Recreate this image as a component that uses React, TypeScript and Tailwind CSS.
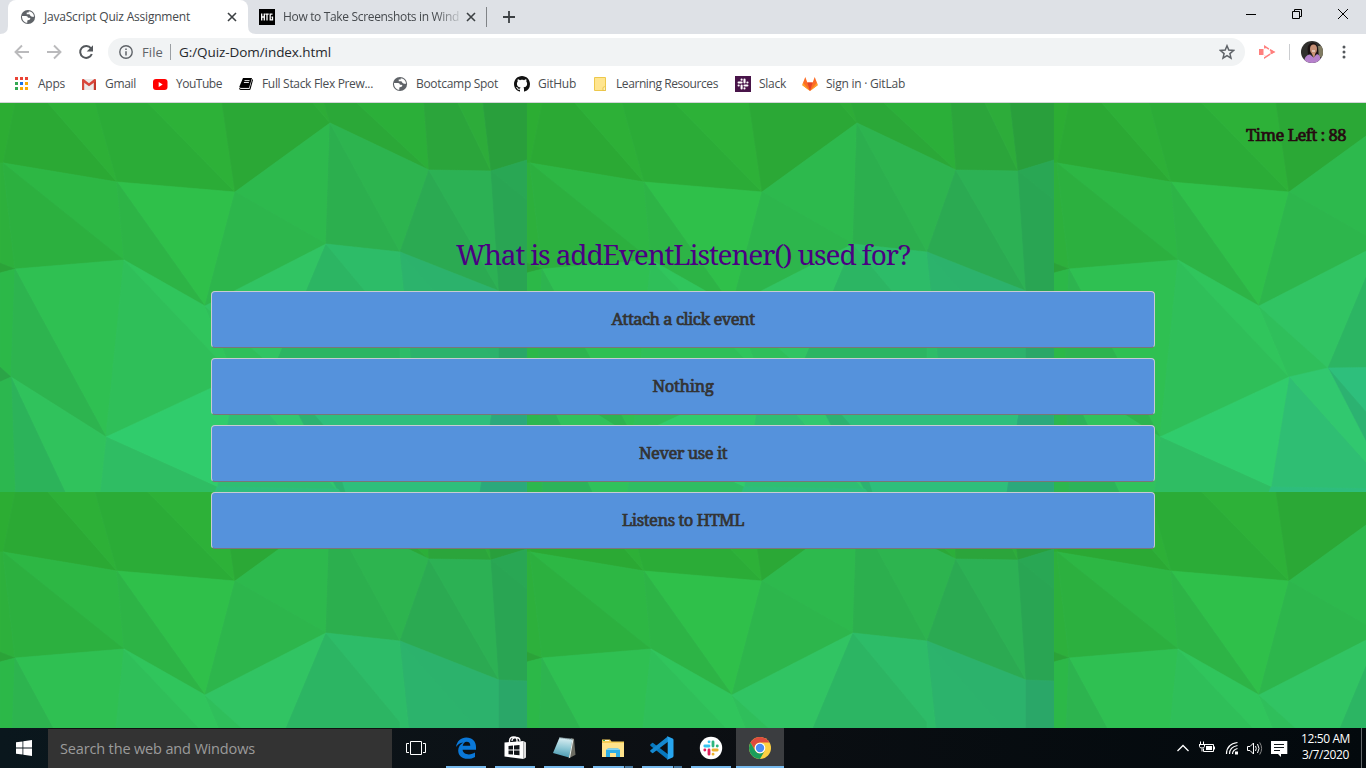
import { useLayoutEffect, useRef, useState } from "react";
import type { ReactNode } from "react";

/* Text set to an exact line width by spreading the difference over its letters. */
function Fit({ w, className = "", children }: { w: number; className?: string; children: string }) {
  const ref = useRef<HTMLSpanElement>(null);
  const [ls, setLs] = useState(0);
  useLayoutEffect(() => {
    if (ref.current) setLs((w - ref.current.getBoundingClientRect().width) / children.length);
  }, [w, children]);
  return (
    <span ref={ref} className={"inline-block whitespace-nowrap " + className} style={{ letterSpacing: ls + "px" }}>
      {children}
    </span>
  );
}

const FACETS: [string, string][] = [
  ["#2cad33", "0,0 15,0 3,60 0,60"],
  ["#2ba934", "15,0 48,0 117,79 3,60"],
  ["#2db037", "48,0 95,0 117,79"],
  ["#2bac37", "95,0 148,0 235,89 117,79"],
  ["#2db138", "148,0 222,0 235,89"],
  ["#2ba836", "222,0 313,0 330,20 235,89"],
  ["#2dac37", "313,0 324,0 330,20"],
  ["#2ba838", "324,0 357,0 429,67 330,20"],
  ["#2baf39", "357,0 424,0 429,67"],
  ["#2ba53b", "424,0 458,0 491,68 429,67"],
  ["#2dac3a", "458,0 483,0 491,68"],
  ["#299f3c", "483,0 527,0 527,57 491,68"],
  ["#2db03c", "0,60 3,60 15,166 0,160"],
  ["#2db744", "3,60 117,79 124,157"],
  ["#2cb03f", "3,60 124,157 15,166"],
  ["#2fc04a", "117,79 235,89 205,203"],
  ["#2db446", "117,79 124,157 205,203"],
  ["#2db94d", "235,89 330,20 326,141"],
  ["#2db64c", "235,89 326,141 205,203"],
  ["#2caf4e", "330,20 326,141 400,149"],
  ["#2db44f", "330,20 429,67 400,149"],
  ["#2baa52", "429,67 400,149 499,188"],
  ["#2cb154", "429,67 491,68 499,188"],
  ["#29a754", "491,68 527,57 527,97"],
  ["#29a553", "491,68 527,97 527,189 499,188"],
  ["#2ba338", "0,160 15,166 0,170"],
  ["#2cb848", "0,170 15,166 11,274 0,264"],
  ["#2fc052", "15,166 124,157 106,334"],
  ["#2db44f", "15,166 106,334 11,274"],
  ["#2fbf59", "124,157 235,274 106,334"],
  ["#30c55c", "124,157 205,203 235,274"],
  ["#2fbf5b", "205,203 274,265 235,274"],
  ["#31c463", "205,203 326,141 274,265"],
  ["#2cb563", "326,141 274,265 400,262 400,230"],
  ["#2dbc68", "326,141 400,149 412,262 400,262 400,230"],
  ["#2cb36c", "400,149 412,262 499,262 499,230"],
  ["#2cb26c", "400,149 499,188 499,262"],
  ["#2aa768", "499,188 527,189 527,270 499,262"],
  ["#2ebf7c", "274,265 499,262 480,389 345,389"],
  ["#2ba97c", "499,262 527,262 527,389 480,389"],
  ["#2cb271", "274,265 325,324 345,389 338,389"],
  ["#31c86f", "235,274 274,265 338,389"],
  ["#2fbe73", "235,274 338,389 217,384"],
  ["#30cc6c", "106,334 235,274 217,384"],
  ["#2fbd63", "106,334 217,384 215,389 100,389"],
  ["#2ebd7c", "217,384 338,386 340,389 215,389"],
  ["#30c25c", "11,274 106,334 100,389 65,389"],
  ["#2cb35a", "11,274 65,389 15,389"],
  ["#2ba447", "0,264 11,274 0,279"],
  ["#2cb74f", "0,279 11,274 15,389 0,389"],
];

function Backdrop() {
  return (
    <svg className="absolute inset-0 h-full w-full" aria-hidden="true">
      <defs>
        <pattern id="poly" width="527" height="389" patternUnits="userSpaceOnUse">
          <rect width="527" height="389" fill="#2db658" />
          {FACETS.map(([fill, pts]) => (
            <polygon key={pts} points={pts} fill={fill} stroke={fill} strokeWidth="0.6" />
          ))}
        </pattern>
      </defs>
      <rect width="100%" height="100%" fill="url(#poly)" />
    </svg>
  );
}

const Globe = () => (
  <svg viewBox="0 0 16 16" className="h-4 w-4">
    <circle cx="8" cy="8" r="7.1" fill="#5f6368" />
    <path d="M2 6.900l4 .1c1.300.1 1.800.8 1.900 1.800h1.500c1 0 1.200 1 .6 1.600l-2.700 1.200v2.200C4 13.600 1.800 10.500 2 6.900z" fill="#fff" />
    <path d="M8.700 2.200v1.200l-2 .2v1.600h2.700l1 1.500 1.500 1 2.200.1C14 4.800 11.700 2.300 8.700 2.200z" fill="#fff" />
  </svg>
);

const AppsIcon = () => (
  <svg viewBox="0 0 16 16" className="h-4 w-4">
    {["#ea4335", "#ea4335", "#ea4335", "#34a853", "#1a73e8", "#fbaa05", "#34a853", "#fbaa05", "#fbaa05"].map((c, i) => (
      <rect key={i} x={1 + (i % 3) * 5} y={1 + Math.floor(i / 3) * 5} width="3" height="3" fill={c} />
    ))}
  </svg>
);

const GmailIcon = () => (
  <svg viewBox="0 0 16 16" className="h-4 w-4">
    <rect x="1" y="3" width="14" height="11" rx="1" fill="#eceaea" />
    <path d="M1 14V4l2.200 1.500V14z" fill="#d54b3d" />
    <path d="M15 14V4l-2.200 1.500V14z" fill="#c3392c" />
    <path d="M1 3.600Q1.500 2.600 2.600 3L8 7.200 13.400 3q1.100-.4 1.600.6v1.600L8 10.200 1 5.200z" fill="#d9453a" />
  </svg>
);

const YouTubeIcon = () => (
  <svg viewBox="0 0 16 16" className="h-4 w-4">
    <rect x="1" y="3" width="14.500" height="11" rx="3" fill="#f00" />
    <path d="M6.700 6.100v4.800l4-2.400z" fill="#fff" />
  </svg>
);

const BookIcon = () => (
  <svg viewBox="0 0 16 16" className="h-4 w-4">
    <path d="M5 2h9L11 12H2.600L1.300 10.800z" fill="#000" />
    <path d="M14.200 3L11.500 12.800H2.500Q1 12 1.400 10.500L1.200 12.500Q1.300 14 3 14h8.500q.8 0 1.100-1L15 4z" fill="#000" />
    <path d="M6.500 4.600h5M5.900 6.500h5" stroke="#fff" strokeWidth=".9" />
    <path d="M2.600 12.400h8.800" stroke="#fff" strokeWidth=".7" />
  </svg>
);

const GitHubIcon = () => (
  <svg viewBox="0 0 16 16" className="h-4 w-4">
    <path
      fill="#111"
      d="M8 0C3.580 0 0 3.580 0 8c0 3.540 2.290 6.530 5.470 7.590.4.07.55-.17.55-.38 0-.19-.01-.82-.01-1.490-2.010.37-2.530-.49-2.690-.94-.09-.23-.48-.94-.82-1.130-.28-.15-.68-.52-.01-.53.63-.01 1.080.58 1.230.82.72 1.210 1.870.87 2.330.66.07-.52.28-.87.51-1.070-1.780-.2-3.640-.89-3.640-3.950 0-.87.31-1.590.82-2.150-.08-.2-.36-1.020.08-2.120 0 0 .67-.21 2.200.82.64-.18 1.320-.27 2-.27s1.360.09 2 .27c1.530-1.040 2.200-.82 2.200-.82.44 1.100.16 1.920.08 2.120.51.56.82 1.270.82 2.150 0 3.070-1.870 3.750-3.650 3.950.29.25.54.73.54 1.480 0 1.070-.01 1.930-.01 2.200 0 .21.15.46.55.38A8.010 8.010 0 0 0 16 8c0-4.420-3.580-8-8-8z"
    />
  </svg>
);

const FolderIcon = () => (
  <svg viewBox="0 0 16 16" className="h-4 w-4">
    <path d="M2.500 1.500h11v13h-11z" fill="#ffe58f" stroke="#edc84c" />
    <path d="M11 14.500v-3q1.500-1.500 2.500 0v3z" fill="#fff0b8" stroke="#e5bd3d" strokeWidth=".8" />
  </svg>
);

const Bar = ({ d, c, w }: { d: string; c: string; w: number }) => (
  <path d={d} stroke={c} strokeWidth={w} strokeLinecap="round" fill="none" />
);

const SlackBookmark = () => (
  <svg viewBox="0 0 16 16" className="h-4 w-4">
    <rect width="16" height="16" fill="#481449" />
    <Bar d="M6.600 3.600v.1M3.600 6.500h3" c="#fff" w={2.100} />
    <Bar d="M9.500 3.600v2.900M12.400 6.500h.1" c="#fff" w={2.100} />
    <Bar d="M9.500 9.500h2.900M9.500 12.400v.1" c="#fff" w={2.100} />
    <Bar d="M6.600 9.500v2.900M3.600 9.500h.1" c="#fff" w={2.100} />
  </svg>
);

const GitLabIcon = () => (
  <svg viewBox="0 0 16 16" className="h-4 w-4">
    <path d="M8 15L.4 9.300 1 6.800 3.300.9 5.300 6.600h5.400L12.700.9 15 6.800l.6 2.500z" fill="#fc6d26" />
    <path d="M5.300 6.600h5.400L8 15z" fill="#e24329" />
    <path d="M.4 9.300L1 6.800 8 15zM15.600 9.300L15 6.800 8 15z" fill="#fca326" />
  </svg>
);

const BOOKMARKS: { icon: ReactNode; label: string; w: number; cell: string }[] = [
  { icon: <AppsIcon />, label: "Apps", w: 27, cell: "w-[67px]" },
  { icon: <GmailIcon />, label: "Gmail", w: 31, cell: "w-[71px]" },
  { icon: <YouTubeIcon />, label: "YouTube", w: 46, cell: "w-[86px]" },
  { icon: <BookIcon />, label: "Full Stack Flex Prew...", w: 111, cell: "w-[154px]" },
  { icon: <Globe />, label: "Bootcamp Spot", w: 82, cell: "w-[122px]" },
  { icon: <GitHubIcon />, label: "GitHub", w: 38, cell: "w-[78px]" },
  { icon: <FolderIcon />, label: "Learning Resources", w: 102, cell: "w-[143px]" },
  { icon: <SlackBookmark />, label: "Slack", w: 27, cell: "w-[67px]" },
  { icon: <GitLabIcon />, label: "Sign in · GitLab", w: 79, cell: "w-[110px]" },
];

const CloseX = () => (
  <svg viewBox="0 0 10 10" className="h-[10px] w-[10px] shrink-0">
    <path d="M1 1l8 8M9 1L1 9" stroke="#3c4043" strokeWidth="1.600" />
  </svg>
);

function TabStrip() {
  return (
    <div className="flex h-[34px] bg-[#dee1e6]">
      <svg viewBox="0 0 8 8" className="h-2 w-2 self-end"><path d="M8 0v8H0q8 0 8-8z" fill="#fff" /></svg>
      <div className="flex w-[240px] items-center rounded-t-lg bg-white pl-3 pr-[11px]">
        <Globe />
        <Fit w={146} className="ml-2 text-[12px] leading-4 text-[#45494d]">JavaScript Quiz Assignment</Fit>
        <span className="grow" />
        <CloseX />
      </div>
      <svg viewBox="0 0 8 8" className="h-2 w-2 self-end"><path d="M0 0v8h8Q0 8 0 0z" fill="#fff" /></svg>
      <div className="flex w-[230px] items-center pl-[3px]">
        <svg viewBox="0 0 16 16" className="h-4 w-4 shrink-0">
          <rect width="16" height="16" fill="#000" />
          <path d="M2.700 4.500v7M5.300 4.500v7M3 8h2M6.300 5.200h3.400M8 5v6.500M13.500 5.200h-2.300v5.600h2.300V8.200h-1" stroke="#fff" strokeWidth="1.300" fill="none" />
        </svg>
        <div className="ml-2 flex w-[177px] [mask-image:linear-gradient(to_right,black_86%,rgba(0,0,0,0.15))]">
          <Fit w={176} className="text-[12px] leading-4 text-[#45494d]">How to Take Screenshots in Wind</Fit>
        </div>
        <span className="ml-[6px] flex"><CloseX /></span>
      </div>
      <div className="mt-[7px] h-5 w-px bg-[#808387]" />
      <svg viewBox="0 0 12 12" className="ml-4 mt-[11px] h-3 w-3"><path d="M6 0v12M0 6h12" stroke="#3c4043" strokeWidth="1.800" /></svg>
      <span className="grow" />
      <div className="flex">
        <svg viewBox="0 0 46 28" className="h-7 w-[46px]"><path d="M18 14.500h10" stroke="#000" /></svg>
        <svg viewBox="0 0 46 28" className="h-7 w-[46px]">
          <path d="M18.500 11.500h7v7h-7zM20.500 11.500v-2h7v7h-2" fill="none" stroke="#000" />
        </svg>
        <svg viewBox="0 0 46 28" className="h-7 w-[46px]"><path d="M18 9l10 10M28 9L18 19" stroke="#000" /></svg>
      </div>
    </div>
  );
}

function Toolbar() {
  return (
    <div className="flex h-9 items-center bg-white">
      <svg viewBox="0 0 108 36" className="h-9 w-[108px] shrink-0" fill="none">
        <path d="M29 18H16M22 11.500L15.500 18l6.500 6.500" stroke="#bababc" strokeWidth="1.900" />
        <path d="M47 18h13M54 11.500l6.500 6.500-6.500 6.500" stroke="#bababc" strokeWidth="1.900" />
        <path d="M91 14.300A6 6 0 1 0 91.800 20" stroke="#54585c" strokeWidth="2" />
        <path d="M93 11.300v6.300h-6.300z" fill="#54585c" />
      </svg>
      <div className="flex h-7 w-[1137px] items-center rounded-full bg-[#f1f3f4] pl-[11px] pr-[10px]">
        <svg viewBox="0 0 14 14" className="h-[14px] w-[14px]" fill="none">
          <circle cx="7" cy="7" r="6.200" stroke="#5f6368" strokeWidth="1.400" />
          <path d="M7 6.200v4.200M7 3.400v1.600" stroke="#5f6368" strokeWidth="1.500" />
        </svg>
        <Fit w={21} className="ml-[9px] text-[13px] leading-5 text-[#5f6368]">File</Fit>
        <span className="mx-[7px] h-4 w-px bg-[#9b9fa3]" />
        <Fit w={152} className="ml-px text-[13.500px] leading-5 text-[#25282c]">G:/Quiz-Dom/index.html</Fit>
        <span className="grow" />
        <svg viewBox="0 0 16 16" className="h-4 w-4">
          <path d="M8 1.800l1.800 4.300 4.700.4-3.600 3.100 1.100 4.600L8 11.700l-4 2.500 1.100-4.600L1.500 6.500l4.700-.4z" fill="none" stroke="#5f6368" strokeWidth="1.500" />
        </svg>
      </div>
      <svg viewBox="0 0 18 16" className="ml-[13px] h-4 w-[18px]">
        <path d="M1 5h4.500v6H1z" fill="#ff7f7d" />
        <path d="M6.800 4.500V2.400L15.500 8l-8.700 5.600v-2.100" fill="none" stroke="#ff7f7d" strokeWidth="1.500" strokeDasharray="7 1.200" />
        <path d="M12.500 5.500L17.500 8l-5 2.500z" fill="#ff7f7d" />
      </svg>
      <span className="ml-[13px] h-4 w-px bg-[#cbcdd0]" />
      <svg viewBox="0 0 22 22" className="ml-[11px] h-[22px] w-[22px]">
        <defs><clipPath id="face"><circle cx="11" cy="11" r="11" /></clipPath></defs>
        <g clipPath="url(#face)">
          <rect width="22" height="22" fill="#302f2d" />
          <path d="M17 5h5v11h-4z" fill="#807b62" />
          <path d="M7 13Q5 2 12 1.500 18 2 17 14z" fill="#1b1212" />
          <ellipse cx="12.500" cy="8" rx="3.500" ry="4.500" fill="#c58e74" />
          <path d="M3 22q0-8 6-8.500l3.500 3 3.500-3.500q4 1 4 9z" fill="#b681cc" />
          <path d="M10.500 12h4l-1.500 5z" fill="#cc9475" />
          <path d="M11 10h3" stroke="#fff" strokeWidth=".9" />
        </g>
      </svg>
      <svg viewBox="0 0 4 14" className="ml-[19px] h-[14px] w-1">
        <circle cx="2" cy="2" r="1.500" fill="#54585c" /><circle cx="2" cy="7" r="1.500" fill="#54585c" /><circle cx="2" cy="12" r="1.500" fill="#54585c" />
      </svg>
    </div>
  );
}

const ANSWERS: [string, number][] = [
  ["Attach a click event", 143],
  ["Nothing", 61],
  ["Never use it", 88],
  ["Listens to HTML", 122],
];

function Quiz() {
  return (
    <main className="relative h-[625px] overflow-hidden font-['Noto_Serif','DejaVu_Serif_Condensed','DejaVu_Serif',serif]">
      <Backdrop />
      <div className="relative flex flex-col items-center">
        <div className="flex w-full justify-end pr-5 pt-5 text-[16.500px] leading-6 text-[#250a10] [-webkit-text-stroke:0.7px_#250a10]">
          <Fit w={100}>Time Left : 88</Fit>
        </div>
        <h1 className="mt-[87px] text-[28px] leading-10 text-[#4b0082]">
          <Fit w={454}>What is addEventListener() used for?</Fit>
        </h1>
        <div className="mt-[17px] flex w-[944px] flex-col gap-[10px]">
          {ANSWERS.map(([label, w]) => (
            <button
              key={label}
              className="flex h-[57px] items-center justify-center rounded-[4px] border border-[#c7cbd3] border-b-[#777] bg-[#5592dc] pb-px text-[16.500px] text-[#333] [-webkit-text-stroke:0.7px_#333]"
            >
              <Fit w={w}>{label}</Fit>
            </button>
          ))}
        </div>
      </div>
    </main>
  );
}

const EdgeIcon = () => (
  <svg viewBox="0 0 24 24" className="h-6 w-6">
    <path d="M2 11C3 5 7 1.500 12.300 1.500c6 0 9.700 4 9.700 9.500v2.800H8.600c.2 3.200 3 4.600 6.200 4.600 2.400 0 4.400-.7 6.200-1.800v4.300c-2 1.200-4.500 1.900-7.300 1.900C7.800 22.800 4.200 19.500 4.200 14.500c0-3.600 2-6.300 5.100-8C5.800 7 3.600 8.700 2 11zm6.700-1.300h7.600c0-2.500-1.200-4-3.600-4-2.200 0-3.600 1.700-4 4z" fill="#0a78d8" />
  </svg>
);
const StoreIcon = () => (
  <svg viewBox="0 0 24 24" className="h-6 w-6">
    <path d="M1.500 6.500l19-1.500v18l-19-2.500z" fill="#fff" />
    <path d="M20.500 5L23 6.500v15L20.500 23z" fill="#ddd" />
    <path d="M6.500 8V4.500Q7 1 10.500 1T14 4.500V7M9 5q0-3.500 4-3.500T17 5" fill="none" stroke="#fff" strokeWidth="1.300" />
    <path d="M5.500 10l4.500-.4v4H5.500zM11 9.500l5.500-.5v4.600H11zM5.500 14.600H10v4l-4.500-.4zM11 14.600h5.500v4.700l-5.500-.6z" fill="#101418" />
  </svg>
);
const NotepadIcon = () => (
  <svg viewBox="0 0 24 24" className="h-6 w-6">
    <defs>
      <linearGradient id="pad" x1=".4" y1="0" x2=".3" y2="1">
        <stop offset="0" stopColor="#dbeef2" />
        <stop offset=".5" stopColor="#8fc8d5" />
        <stop offset="1" stopColor="#4596ae" />
      </linearGradient>
    </defs>
    <path d="M19 2l3 .8 1.500 16-7 3.700z" fill="#6b6b62" />
    <path d="M7.500 1.500L20.500 3 17 21.500 1 17z" fill="url(#pad)" />
    <path d="M20.500 3l1 .4L18 22l-1-.5z" fill="#e8f0ee" />
    <path d="M7.500 1.700l13 1.600" stroke="#677f86" strokeWidth="1.200" strokeDasharray="1 1" />
  </svg>
);
const ExplorerIcon = () => (
  <svg viewBox="0 0 24 24" className="h-6 w-6">
    <path d="M1 3.500h8l1.500 2H23V21H1z" fill="#f5ce58" />
    <path d="M1 7h22v14H1z" fill="#ffe38b" />
    <path d="M3 4.500h5" stroke="#fffbe5" /><path d="M2 4.500h2" stroke="#35a852" />
    <path d="M5 21v-7l2-1.500h10l2 1.500v7h-4v-4H9v4z" fill="#2eaee6" />
    <path d="M5 14l2-1.500h10l2 1.500z" fill="#85d5f5" />
  </svg>
);
const CodeIcon = () => (
  <svg viewBox="0 0 24 24" className="h-6 w-6">
    <path d="M.4 8.400L2.100 7q.5-.3 1 0L18 18.300V23q-.6.400-1.500-.4L.4 9.700q-.5-.7 0-1.300z" fill="#0878be" />
    <path d="M.4 15.600L2.100 17q.5.300 1 0L18 5.700V1q-.6-.4-1.500.4L.4 14.300q-.5.700 0 1.300z" fill="#1588cf" />
    <path d="M17.300.2q-.6.800.4 1v21.600q-1 .2-.4 1l5.300-2.400q.9-.4.900-1.400V4q0-1-.9-1.400z" fill="#27a5ef" />
  </svg>
);
const SlackTask = () => (
  <svg viewBox="0 0 24 24" className="h-6 w-6">
    <circle cx="12" cy="12" r="11.200" fill="#fff" />
    <Bar d="M5.800 10h4.200M10 5.800h.1" c="#36c5f0" w={2.800} />
    <Bar d="M14 5.800V10M18.200 10h.1" c="#2eb67d" w={2.800} />
    <Bar d="M14 14h4.200M14 18.200h.1" c="#ecb22e" w={2.800} />
    <Bar d="M10 14v4.200M5.800 14h.1" c="#e01e5a" w={2.800} />
  </svg>
);
const ChromeIcon = () => (
  <svg viewBox="0 0 24 24" className="h-6 w-6">
    <circle cx="12" cy="12" r="11" fill="#fdd042" />
    <path d="M2.500 6.500A11 11 0 0 1 21.500 6.500H12a5.500 5.500 0 0 0-4.800 8.200z" fill="#dd4b3e" />
    <path d="M2.500 6.500A11 11 0 0 0 12 23l4.800-8.300a5.500 5.500 0 0 1-9.600 0z" fill="#1b9d5b" />
    <circle cx="12" cy="12" r="5.300" fill="#fff" />
    <circle cx="12" cy="12" r="4.200" fill="#4b8bf4" />
  </svg>
);

function TaskItem({ children, stacked = false }: { children: ReactNode; stacked?: boolean }) {
  return (
    <div className="flex h-full w-10 flex-col items-center">
      <span className="flex grow items-center pt-[1px]">{children}</span>
      <span className="flex h-[2px] w-full">
        <span className="grow bg-[#76b9ed]" />
        {stacked && <span className="w-[9px] border-l border-[#1c2c3a] bg-[#4a7ba2]" />}
      </span>
    </div>
  );
}

function Taskbar() {
  return (
    <footer className="flex h-10 bg-gradient-to-r from-[#0a171d] via-[#0c0f13] to-[#03090d] text-white">
      <div className="flex w-12 items-center justify-center">
        <svg viewBox="0 0 16 16" className="h-4 w-4" fill="#fff"><path d="M0 2.300L6.500 1.400v6.200H0zM7.300 1.300L16 0v7.600H7.300zM0 8.400h6.500v6.200L0 13.700zM7.300 8.400H16V16l-8.700-1.300z" /></svg>
      </div>
      <div className="flex w-[344px] items-center border-t border-[#111] bg-[#333] pl-3">
        <Fit w={195} className="text-[14.500px] leading-5 text-[#9b9b9b]">Search the web and Windows</Fit>
      </div>
      <div className="flex w-[54px] pl-[14px] pt-[13px]">
        <svg viewBox="0 0 20 14" className="h-[14px] w-5" fill="none" stroke="#fff">
          <path d="M4.500 .5h11v13h-11zM3 2.500H.500v9H3M17 2.500h2.500v9H17" />
        </svg>
      </div>
      <div className="flex gap-[9px]">
        <TaskItem><EdgeIcon /></TaskItem>
        <TaskItem><StoreIcon /></TaskItem>
        <TaskItem><NotepadIcon /></TaskItem>
        <TaskItem stacked><ExplorerIcon /></TaskItem>
        <TaskItem stacked><CodeIcon /></TaskItem>
        <TaskItem><SlackTask /></TaskItem>
      </div>
      <div className="ml-[5px] flex w-12 flex-col items-center bg-[#3b3d40]">
        <span className="flex grow items-center pt-[1px]"><ChromeIcon /></span>
        <span className="h-[2px] w-full bg-[#76b9ed]" />
      </div>
      <span className="grow" />
      <svg viewBox="0 0 116 40" className="h-10 w-[116px]" fill="none" stroke="#fff">
        <path d="M3.500 23L9 17.500l5.500 5.500" strokeWidth="1.300" />
        <path d="M30 16.500h9.500v7h-10v-3M40.500 18.500v3" />
        <path d="M32 18h6v4h-6z" fill="#fff" stroke="none" />
        <path d="M25 16.500h6M25.500 17v1.500q0 1.500 2.500 1.500t2.500-1.500V17M26.500 16v-2.500M29.500 16v-2.500M28 20.500v3" />
        <path d="M52.500 26Q52.500 16 63.500 14.500M55.500 26Q55.500 19 63.500 17.500M58.500 26Q58.500 22 63.500 20.500" strokeWidth="1.200" />
        <path d="M61 23.500h3v3h-3z" fill="#fff" stroke="none" />
        <path d="M73.500 18.500h2.500l3.500-3.500v11L76 22.500h-2.500zM81.500 18q1.500 2.500 0 5M83.500 16q3 4.500 0 9" />
        <path d="M85.700 14.500q3.800 6 0 12" stroke="#888" />
        <path d="M97 13h16.300v13h-6.300v3l-3-3h-7z" fill="#fff" stroke="none" />
        <path d="M100 16.500h10M100 19.500h10M100 22.500h6" stroke="#10161a" />
      </svg>
      <div className="flex w-[71px] flex-col items-center pt-[3px] text-[12px] leading-[16px]">
        <Fit w={49}>12:50 AM</Fit>
        <Fit w={47}>3/7/2020</Fit>
      </div>
      <span className="mr-1 h-full w-px bg-[#62676a]" />
    </footer>
  );
}

export default function App() {
  return (
    <div className="flex h-[768px] w-[1366px] flex-col overflow-hidden bg-white font-['Open_Sans','Noto_Sans',sans-serif]">
      <TabStrip />
      <Toolbar />
      <nav className="flex h-[33px] items-center border-b border-[#d3d5d8] pb-[4px] pl-[14px]">
        {BOOKMARKS.map((b) => (
          <a key={b.label} className={"flex items-center gap-2 " + b.cell}>
            {b.icon}
            <Fit w={b.w} className="text-[12px] leading-4 text-[#4a4d51]">{b.label}</Fit>
          </a>
        ))}
      </nav>
      <Quiz />
      <Taskbar />
    </div>
  );
}
